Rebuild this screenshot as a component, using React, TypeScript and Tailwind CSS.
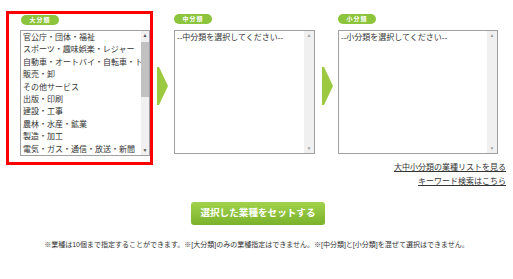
import React from "react";

const font = { fontFamily: "'Liberation Sans','Noto Sans CJK JP',sans-serif" };

function Badge({ label }: { label: string }) {
  return (
    <div className="h-[10px] w-[38px] rounded-full bg-[#8cc43c] flex items-center justify-center text-white font-bold text-[6px] leading-none tracking-[1px]">
      {label}
    </div>
  );
}

function Scrollbar({ width, thumb, dark }: { width: string; thumb?: boolean; dark?: boolean }) {
  const arrow = dark ? "text-[#505050]" : "text-[#a3a3a3]";
  return (
    <div className={`${width} h-full bg-[#f0f0f0] flex flex-col items-center shrink-0`}>
      <div className={`h-[9px] flex items-center justify-center text-[5px] leading-none ${arrow}`}>▲</div>
      <div className="flex-1 w-full">
        {thumb && <div className="mt-[2px] h-[55px] w-full bg-[#c1c1c1]" />}
      </div>
      <div className={`h-[9px] flex items-center justify-center text-[5px] leading-none ${arrow}`}>▼</div>
    </div>
  );
}

function Arrow() {
  return (
    <svg width="11" height="38" viewBox="0 0 11 38" className="block">
      <polygon points="0,0 2,0 11,19 2,38 0,38" fill="#9bc93f" />
    </svg>
  );
}

const items = [
  "官公庁・団体・福祉",
  "スポーツ・趣味娯楽・レジャー",
  "自動車・オートバイ・自転車・ト",
  "販売・卸",
  "その他サービス",
  "出版・印刷",
  "建設・工事",
  "農林・水産・鉱業",
  "製造・加工",
  "電気・ガス・通信・放送・新聞",
];

export default function App() {
  return (
    <div className="w-[513px] h-[279px] bg-white text-[#333] overflow-hidden" style={font}>
      <div className="flex items-start pt-[11px] pl-[6px]">
        {/* column 1 with red highlight */}
        <div className="w-[147px] h-[154px] border-[3px] border-[#ff0000] pl-[11px] pt-[1px] shrink-0">
          <div className="ml-[1px]">
            <Badge label="大分類" />
          </div>
          <div className="mt-[5px] w-[130px] h-[126px] border border-[#a0a0a0] flex bg-white">
            <div className="flex-1 overflow-hidden pl-[2px] pt-[1px] text-[8px] leading-[12.4px] whitespace-nowrap">
              {items.map((t) => (
                <div key={t}>{t}</div>
              ))}
            </div>
            <Scrollbar width="w-[8px]" thumb dark />
          </div>
        </div>

        <div className="ml-[4px] mt-[56px]">
          <Arrow />
        </div>

        {/* column 2 */}
        <div className="ml-[6px] mt-[3px] shrink-0">
          <Badge label="中分類" />
          <div className="mt-[6px] w-[141px] h-[124px] border border-[#a0a0a0] flex bg-white">
            <div className="flex-1 overflow-hidden pl-[2px] pt-[1px] text-[8px] leading-[12.4px] whitespace-nowrap">
              --中分類を選択してください--
            </div>
            <Scrollbar width="w-[10px]" />
          </div>
        </div>

        <div className="ml-[7px] mt-[56px]">
          <Arrow />
        </div>

        {/* column 3 */}
        <div className="ml-[5px] mt-[3px] shrink-0">
          <Badge label="小分類" />
          <div className="mt-[6px] w-[160px] h-[124px] border border-[#a0a0a0] flex bg-white">
            <div className="flex-1 overflow-hidden pl-[2px] pt-[1px] text-[8px] leading-[12.4px] whitespace-nowrap">
              --小分類を選択してください--
            </div>
            <Scrollbar width="w-[10px]" />
          </div>
        </div>
      </div>

      <div className="-mt-[4px] pr-[7px] flex flex-col items-end text-[8px] leading-[14px]">
        <span className="underline">大中小分類の業種リストを見る</span>
        <span className="underline">キーワード検索はこちら</span>
      </div>

      <div className="mt-[13px] flex justify-center">
        <div className="ml-[3px] w-[134px] h-[23px] rounded-[3px] bg-gradient-to-b from-[#a2d24c] to-[#7ab22a] flex items-center justify-center text-white font-bold text-[9.6px]">
          選択した業種をセットする
        </div>
      </div>

      <div className="mt-[14px] text-center text-[7px] leading-[12px]">
        ※業種は10個まで指定することができます。※[大分類]のみの業種指定はできません。※[中分類]と[小分類]を混ぜて選択はできません。
      </div>
    </div>
  );
}
